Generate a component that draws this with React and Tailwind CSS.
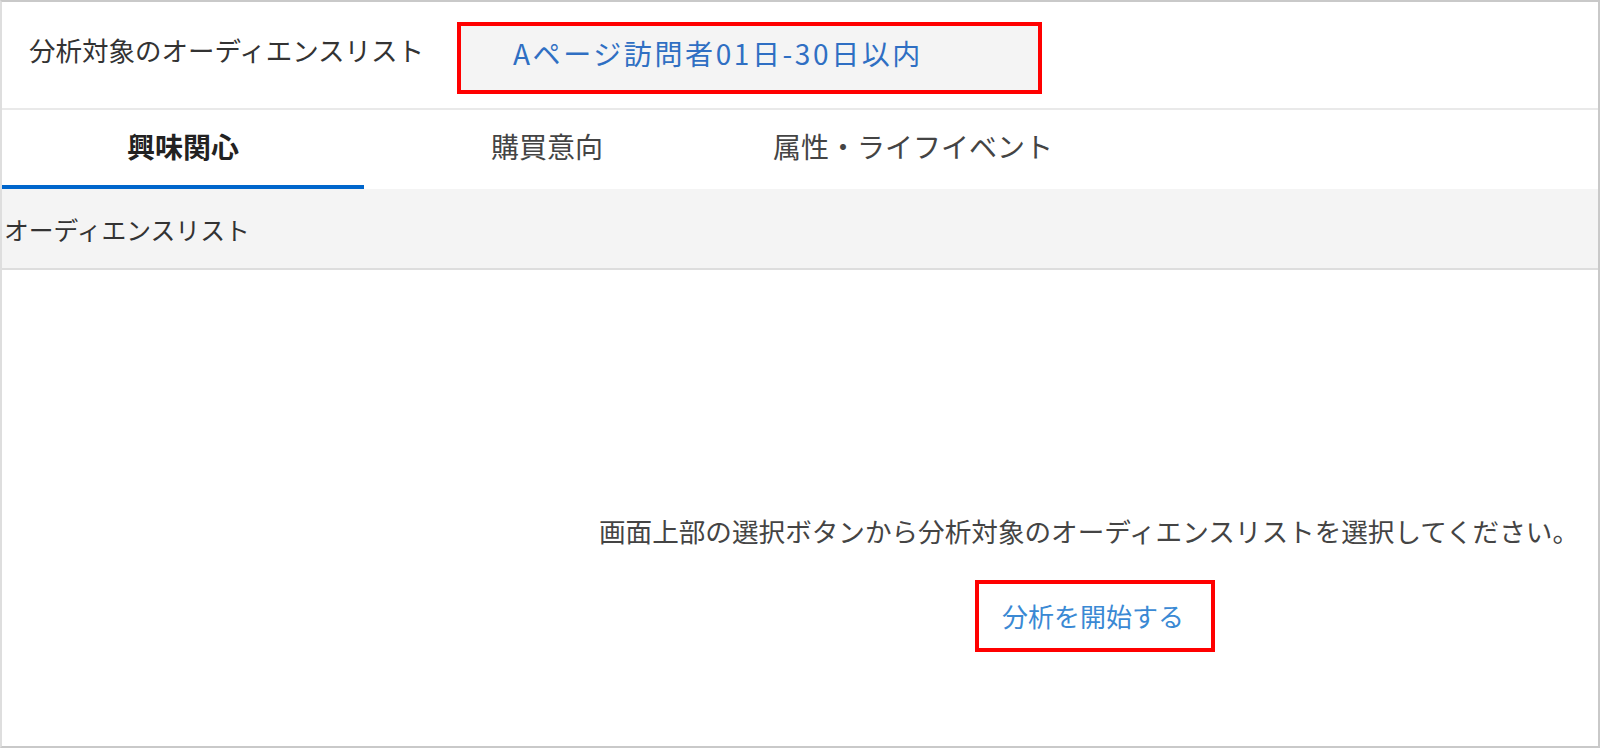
import React, { useState } from "react";

const tabs = [
  { label: "興味関心", width: "w-[362px]" },
  { label: "購買意向", width: "w-[366px]" },
  { label: "属性・ライフイベント", width: "w-[366px]" },
];

const App = () => {
  const [active, setActive] = useState(0);

  return (
    <div className="w-[1600px] h-[748px] box-border border-2 border-[#c9c9c9] border-l-[#dedede] bg-white flex flex-col overflow-hidden font-['Noto_Sans_CJK_JP','Noto_Sans',sans-serif]">
      {/* header */}
      <div className="h-[108px] shrink-0 box-border border-b-2 border-[#e9e9e9] flex items-start pl-[27px]">
        <span className="w-[428px] pt-[28px] text-[26.5px] leading-[40px] text-[#333333] whitespace-nowrap">分析対象のオーディエンスリスト</span>
        <div className="mt-[20px] w-[585px] h-[72px] box-border border-4 border-[#ff0000] bg-[#f4f4f4] flex items-center pl-[52px] pb-[10px]">
          <span className="text-[28px] leading-[40px] tracking-[2.6px] text-[#2f6fc3] whitespace-nowrap">Aページ訪問者01日-30日以内</span>
        </div>
      </div>

      {/* tabs */}
      <div className="h-[79px] shrink-0 flex">
        {tabs.map((tab, index) => (
          <button
            key={index}
            type="button"
            onClick={() => setActive(index)}
            className={
              tab.width +
              " h-full box-border border-b-4 flex items-center justify-center pb-[4px] text-[28px] leading-[40px] " +
              (active === index ? "border-[#0066cc] font-bold text-[#222222]" : "border-transparent text-[#444444]")
            }
          >
            {tab.label}
          </button>
        ))}
      </div>

      {/* sub header */}
      <div className="h-[81px] shrink-0 box-border border-b-2 border-[#dddddd] bg-[#f4f4f4] flex items-center pl-[2px]">
        <span className="text-[24.8px] leading-[34px] text-[#333333]">オーディエンスリスト</span>
      </div>

      {/* body */}
      <div className="flex-1 flex flex-col items-center pl-[578px] pt-[243px]">
        <p className="text-[26.6px] leading-[36px] text-[#444444] whitespace-nowrap">
          画面上部の選択ボタンから分析対象のオーディエンスリストを選択してください。
        </p>
        <button type="button" className="ml-3 mt-[31px] w-[240px] h-[72px] box-border border-4 border-[#ff0000] bg-white flex items-center justify-center pr-[4px]">
          <span className="text-[26px] leading-[36px] text-[#3a89d4]">分析を開始する</span>
        </button>
      </div>
    </div>
  );
};

export default App;
